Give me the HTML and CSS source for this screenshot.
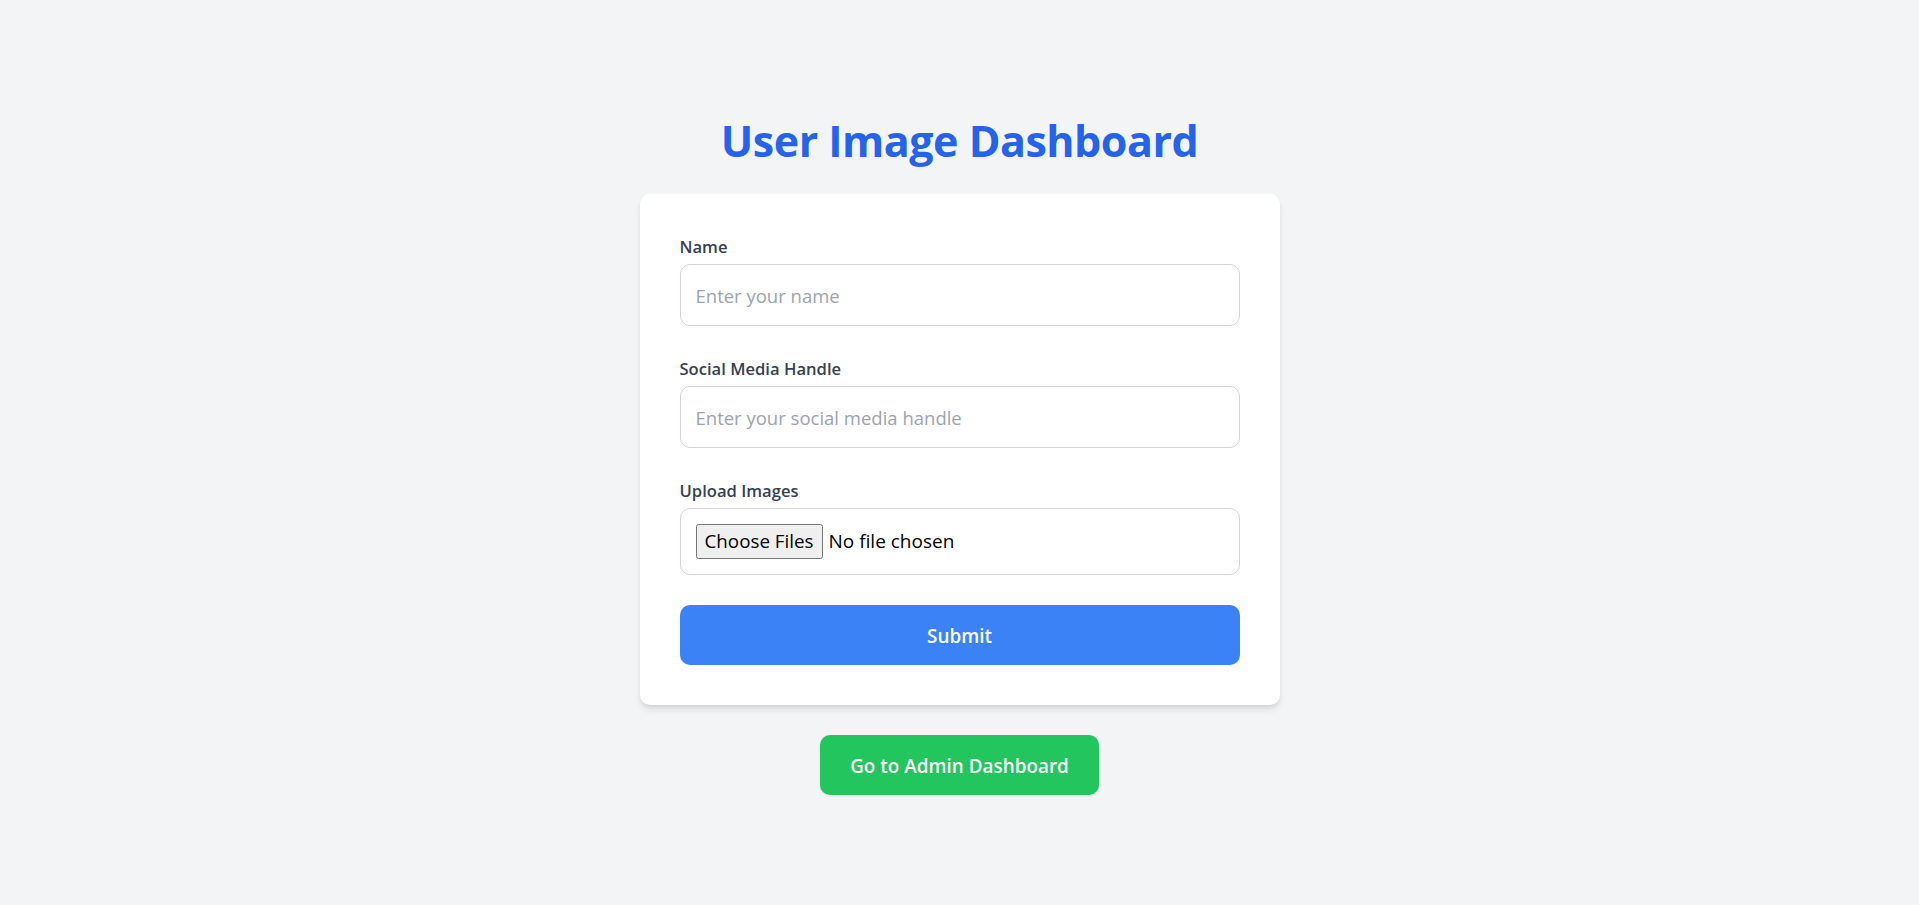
FILE: index.html
```html
<!DOCTYPE html>
<html lang="en">
<head>
<meta charset="utf-8">
<title>User Image Dashboard</title>
<link rel="stylesheet" href="styles.css">
</head>
<body>
<main class="page">
  <h1 class="title">User Image Dashboard</h1>
  <form class="card">
    <div class="field">
      <label class="label" for="name">Name</label>
      <input class="input" id="name" type="text" placeholder="Enter your name">
    </div>
    <div class="field">
      <label class="label" for="handle">Social Media Handle</label>
      <input class="input" id="handle" type="text" placeholder="Enter your social media handle">
    </div>
    <div class="field">
      <label class="label" for="images">Upload Images</label>
      <input class="file" id="images" type="file" multiple>
    </div>
    <button class="submit" type="button">Submit</button>
  </form>
  <a class="admin" href="#">Go to Admin Dashboard</a>
</main>
</body>
</html>
```
FILE: styles.css
```css
* { box-sizing: border-box; }

html, body {
  margin: 0;
  padding: 0;
}

body {
  background: #f3f4f6;
  font-family: "Open Sans", "Noto Sans", sans-serif;
  color: #111827;
}

.page {
  min-height: 905px;
  padding-top: 4px;
  display: flex;
  flex-direction: column;
  align-items: center;
  justify-content: center;
}

.title {
  margin: 0 0 28px;
  padding-top: 2px;
  font-size: 43px;
  line-height: 50px;
  font-weight: 700;
  letter-spacing: -0.5px;
  color: #2563eb;
}

.card {
  width: 640px;
  background: #ffffff;
  border-radius: 10px;
  padding: 40px;
  box-shadow: 0 5px 7.5px -1.25px rgba(0, 0, 0, 0.1), 0 2.5px 5px -2.5px rgba(0, 0, 0, 0.1);
  display: flex;
  flex-direction: column;
}

.field {
  display: flex;
  flex-direction: column;
  margin-bottom: 30px;
}

.label {
  display: block;
  font-size: 16.6px;
  line-height: 25px;
  font-weight: 600;
  color: #374151;
  margin-bottom: 5px;
}

.input {
  width: 100%;
  height: 62px;
  padding: 15px;
  border: 1px solid #d1d5db;
  border-radius: 10px;
  font-family: inherit;
  font-size: 18.5px;
  line-height: 30px;
  color: #111827;
  background: #ffffff;
  outline: none;
}

.input::placeholder {
  color: #9ca3af;
  opacity: 1;
}

.file {
  width: 100%;
  height: 67px;
  padding: 15px;
  border: 1px solid #d1d5db;
  border-radius: 10px;
  font-family: inherit;
  font-size: 19px;
  line-height: 30px;
  color: #000000;
  background: #ffffff;
}

.file::file-selector-button {
  font-family: inherit;
  font-size: 18.8px;
  line-height: 25px;
  height: 35px;
  padding: 0 8px;
  margin-right: 6px;
  border: 1px solid #767676;
  border-radius: 2.5px;
  background: #efefef;
  color: #000000;
}

.submit {
  width: 100%;
  height: 60px;
  padding: 16px 15px 14px;
  border: none;
  border-radius: 10px;
  background: #3b82f6;
  color: #ffffff;
  font-family: inherit;
  font-size: 18.9px;
  font-weight: 600;
  line-height: 30px;
  cursor: pointer;
}

.admin {
  margin-top: 30px;
  height: 60px;
  padding: 16px 30px 14px;
  border-radius: 10px;
  background: #22c55e;
  color: #ffffff;
  font-size: 18.9px;
  font-weight: 600;
  line-height: 30px;
  text-decoration: none;
  box-shadow: 0 1px 3px rgba(0, 0, 0, 0.08);
}
```
